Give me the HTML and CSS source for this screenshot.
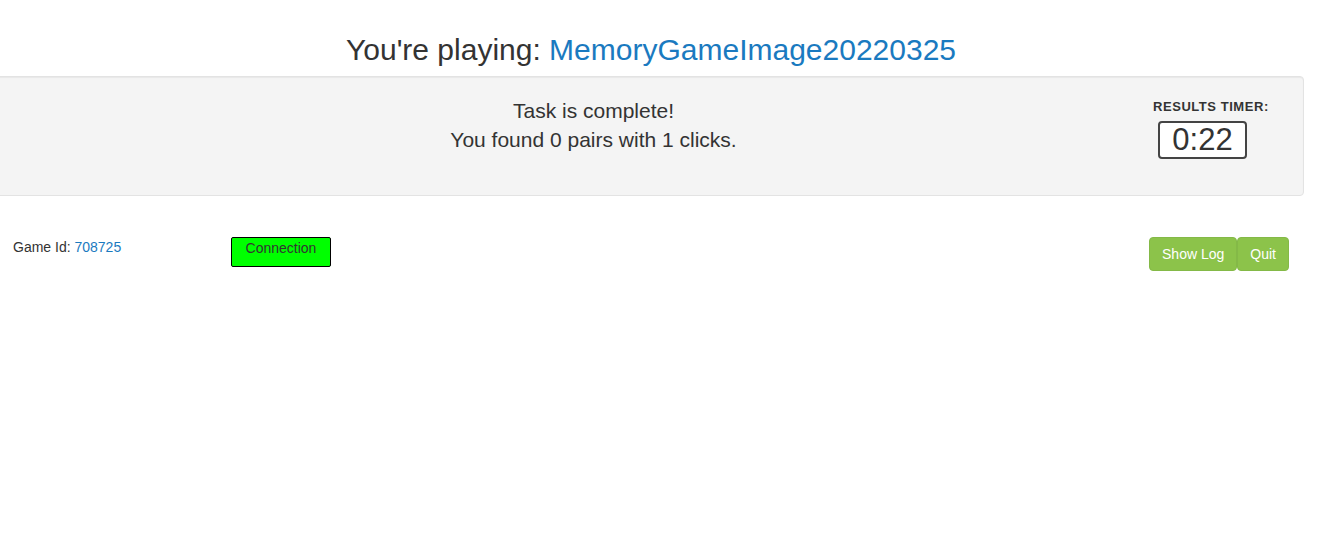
FILE: index.html
```html
<!DOCTYPE html>
<html>
<head>
<meta charset="utf-8">
<link rel="stylesheet" href="styles.css">
</head>
<body>
<h1 class="title">You're playing: <a class="link" href="#">MemoryGameImage20220325</a></h1>
<div class="well">
  <div class="message">
    <div>Task is complete!</div>
    <div>You found 0 pairs with 1 clicks.</div>
  </div>
  <div class="timer-col">
    <div class="timer-label">RESULTS TIMER:</div>
    <div class="timer-box">0:22</div>
  </div>
</div>
<div class="bottom-row">
  <div class="game-id">Game Id: <a class="link" href="#">708725</a></div>
  <div class="connection">Connection</div>
  <div class="spacer"></div>
  <div class="btn-group">
    <button class="btn">Show Log</button>
    <button class="btn">Quit</button>
  </div>
</div>
</body>
</html>
```
FILE: styles.css
```css
html, body {
  margin: 0;
  padding: 0;
  background: #fff;
}
body {
  font-family: "Liberation Sans", Arial, sans-serif;
  font-size: 14px;
  line-height: 1.42857;
  color: #333;
  overflow: hidden;
}
.link {
  color: #1a7ac0;
  text-decoration: none;
}
.title {
  margin: 32px 0 0 0;
  font-size: 30px;
  font-weight: normal;
  line-height: 36px;
  text-align: center;
  padding-right: 24px;
  height: 44px;
  box-sizing: border-box;
}
.well {
  display: flex;
  margin-left: -20px;
  width: 1324px;
  box-sizing: border-box;
  height: 120px;
  background: #f4f4f4;
  border: 1px solid #e3e3e3;
  border-radius: 4px;
  box-shadow: inset 0 1px 1px rgba(0,0,0,0.05);
  padding: 19px 0 19px 20px;
}
.message {
  flex: 0 0 1152px;
  box-sizing: border-box;
  padding-left: 33px;
  text-align: center;
  font-size: 21px;
  line-height: 29px;
  padding-top: 0;
}
.timer-col {
  display: flex;
  flex-direction: column;
  align-items: flex-start;
  padding-top: 2px;
}
.timer-label {
  font-size: 13px;
  font-weight: bold;
  letter-spacing: 0.55px;
  line-height: 17px;
}
.timer-box {
  margin-top: 6px;
  margin-left: 5px;
  width: 89px;
  height: 38px;
  box-sizing: border-box;
  border: 2px solid #444;
  border-radius: 4px;
  background: #fff;
  font-size: 31px;
  line-height: 33px;
  text-align: center;
}
.bottom-row {
  display: flex;
  align-items: flex-start;
  margin-top: 41px;
  padding: 0 37px 0 13px;
}
.game-id {
  font-size: 14px;
  line-height: 18px;
  padding-top: 1px;
  width: 218px;
}
.connection {
  width: 100px;
  height: 30px;
  box-sizing: border-box;
  background: #00ff00;
  border: 1px solid #000;
  border-radius: 2px;
  font-size: 14px;
  line-height: 20px;
  text-align: center;
  color: #333;
}
.spacer {
  flex: 1;
}
.btn-group {
  display: flex;
}
.btn {
  font-family: "Liberation Sans", Arial, sans-serif;
  font-size: 14px;
  line-height: 20px;
  padding: 6px 12px;
  color: #fff;
  background: #8cc34a;
  border: 1px solid #84b947;
  border-radius: 4px;
  height: 34px;
  margin: 0;
}
```
